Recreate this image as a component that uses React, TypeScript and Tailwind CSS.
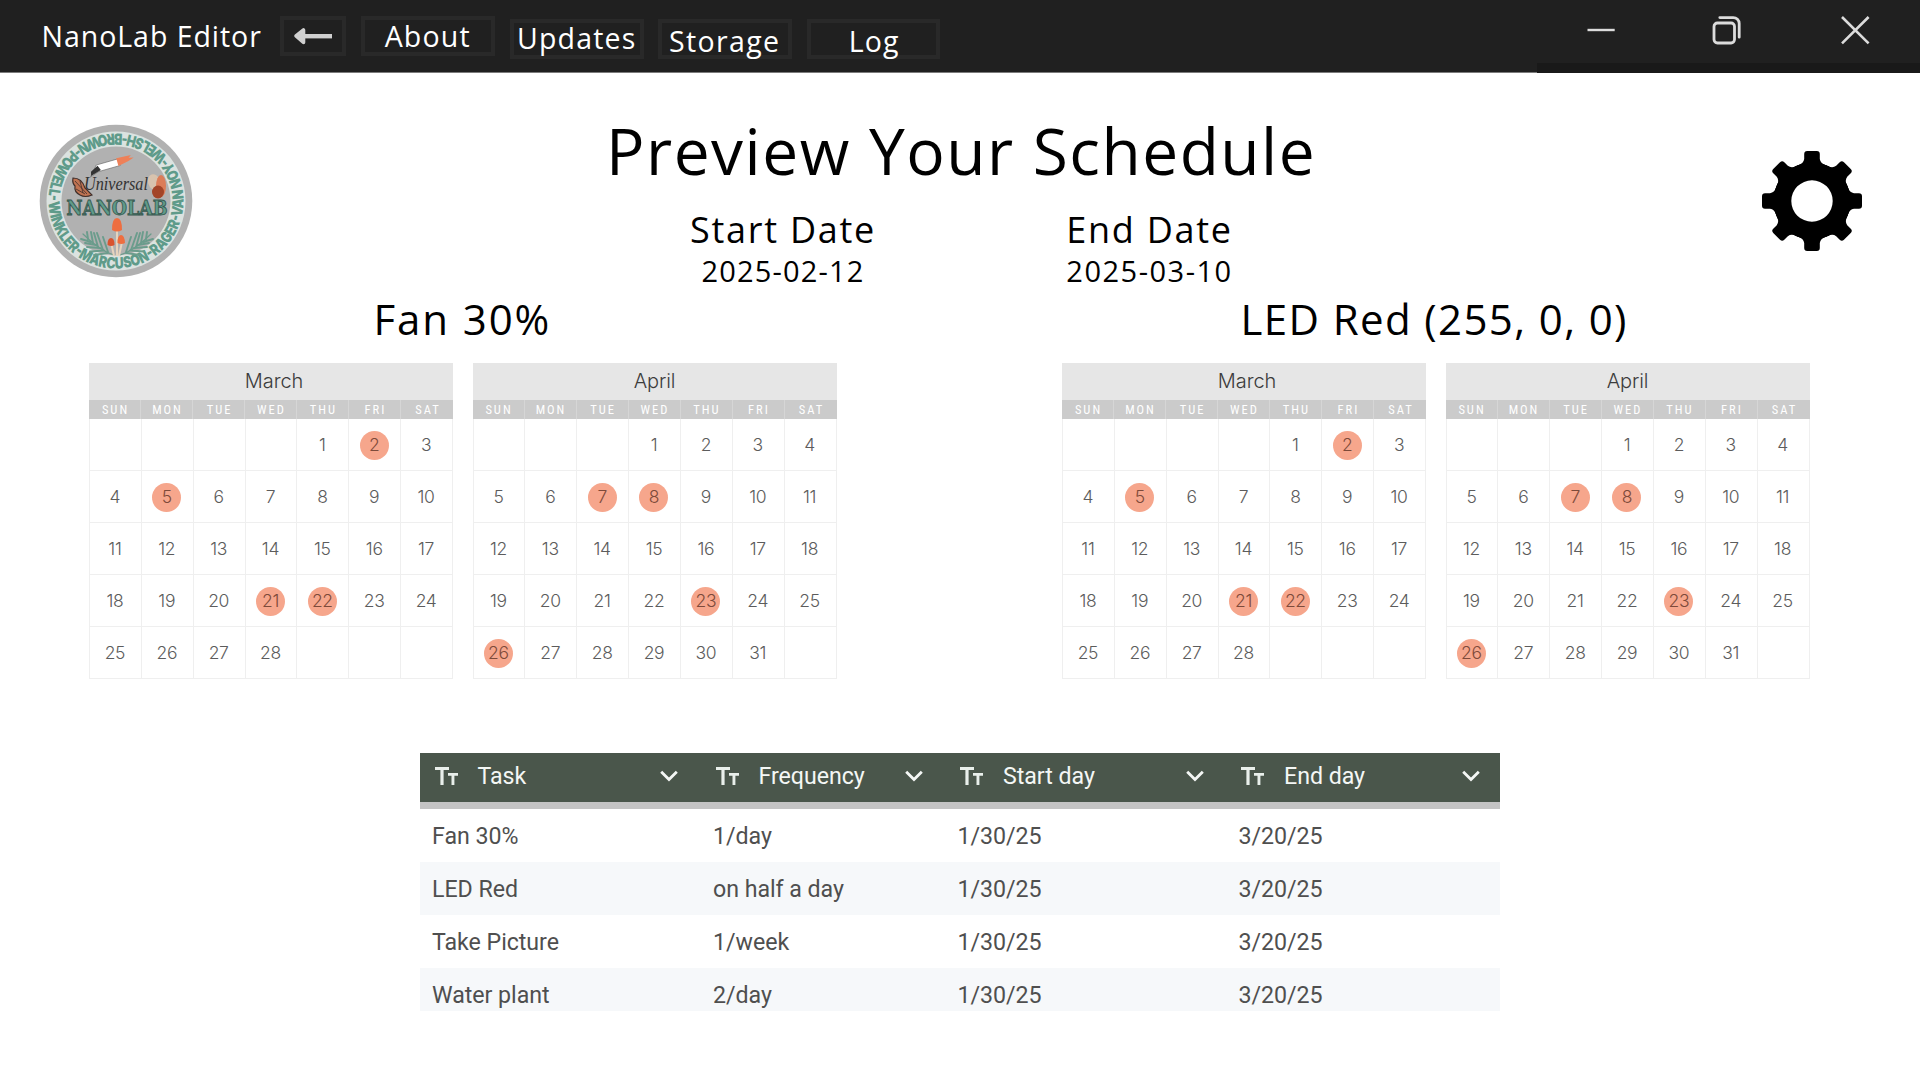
type Month = { name: string; offset: number; days: number; marked: number[]; titleClass: string };

const MONTHS: Month[] = [
  { name: 'March', offset: 4, days: 28, marked: [2, 5, 21, 22], titleClass: 'pl-1.5' },
  { name: 'April', offset: 3, days: 31, marked: [7, 8, 23, 26], titleClass: '' },
];
const WEEKDAYS = ['SUN', 'MON', 'TUE', 'WED', 'THU', 'FRI', 'SAT'];

const COLUMNS = ['Task', 'Frequency', 'Start day', 'End day'];
const TASKS = [
  ['Fan 30%', '1/day', '1/30/25', '3/20/25'],
  ['LED Red', 'on half a day', '1/30/25', '3/20/25'],
  ['Take Picture', '1/week', '1/30/25', '3/20/25'],
  ['Water plant', '2/day', '1/30/25', '3/20/25'],
];

function NavButton({ label, box, text }: { label: string; box: string; text: string }) {
  return (
    <button className={`flex h-10 w-[133.5px] items-start justify-center border-4 border-[#292929] ${box}`}>
      <span className={`whitespace-nowrap text-[28.5px] leading-10 ${text}`}>{label}</span>
    </button>
  );
}

function TitleBar() {
  return (
    <header className="flex h-[73px] items-start bg-[#202020] text-white">
      <div className="flex h-[73px] flex-1 items-start border-b border-[#7c7c7c]">
        <div className="mt-4 ml-[41.5px] w-[238.5px] whitespace-nowrap text-[28.5px] leading-10 tracking-[0.96px]">
          NanoLab Editor
        </div>
        <button className="mt-4 flex h-10 w-[66px] items-center justify-center border-4 border-[#292929]">
          <svg width="40" height="18" viewBox="0 0 40 18">
            <path d="M12 7h27v4.4H12z" fill="#d0d0d0" />
            <path d="M3 9 10.5 3v12.4z" fill="#d0d0d0" stroke="#d0d0d0" strokeWidth="3.6" strokeLinejoin="round" />
          </svg>
        </button>
        <nav className="flex items-start">
          <NavButton label="About" box="ml-[15px] mt-4" text="-mt-1 tracking-[1.2px]" />
          <NavButton label="Updates" box="ml-[15.5px] mt-[19px]" text="-mt-[5px] tracking-[1.2px]" />
          <NavButton label="Storage" box="ml-[14.5px] mt-[19px]" text="-mt-[2px] tracking-[1.35px]" />
          <NavButton label="Log" box="ml-[15px] mt-[19px]" text="-mt-[2px] tracking-[1.2px] pl-0.5" />
        </nav>
      </div>
      <div className="flex h-[73px] w-[383px] items-start border-b-[10px] border-[#191919]">
        <svg width="383" height="60" viewBox="0 0 383 60" fill="none" stroke="#dcdcdc" strokeWidth="2">
          <path d="M50.5 30h27.2" strokeWidth="2.4" />
          <rect x="177" y="23" width="20.5" height="20" rx="3.4" strokeWidth="2.8" />
          <path d="M182.8 17.6h13.4a6 6 0 0 1 6 6v13.6" strokeWidth="2.8" strokeLinecap="round" />
          <path d="m305 17 26.6 26.4M331.6 17 305 43.4" strokeWidth="2.6" />
        </svg>
      </div>
    </header>
  );
}

function Fern() {
  return (
    <g fill="none" stroke="#6b9c8c" strokeWidth="1.9" strokeLinecap="round">
      <path d="M-2 54Q-16 50-33 33" strokeWidth="1.2" />
      <path d="M-8 52l-14 2M-12 49.500l-14 1M-16 47l-13-1M-20 44l-11-2M-25 41l-10-3M-8 51l-5-15M-13 49l-6-17M-18 46l-4-14M-23 42l-2-11M-28 38l-1-7" />
    </g>
  );
}

function Logo() {
  return (
    <svg width="154" height="154" viewBox="-77 -77 154 154">
      <defs>
        <path id="logo-ring" d="M-67.500 0A67.500 67.500 0 0 0 67.500 0A67.500 67.500 0 0 0-67.500 0" />
      </defs>
      <circle r="76.300" fill="#b1b1b1" />
      <circle r="69.500" fill="#dbe3e0" />
      <circle r="54.500" fill="#b1b1b1" />
      <text fill="#5f9b8a" className="font-['Inter'] text-[15.5px] font-black">
        <textPath href="#logo-ring" startOffset="1" textLength="422" lengthAdjust="spacingAndGlyphs">
          WINKLER-MARCUSON-RAGER-VAN NOY-WELSH-BROWN-POWELL-
        </textPath>
      </text>
      <g transform="rotate(-16)">
        <path d="M-9-40h23v7h-23l-9 3z" fill="#fff" stroke="#666" strokeWidth="0.600" />
        <path d="M-16-35l8-4 2 5-11 3z" fill="#333" />
        <path d="M12-41l15 1-3 2 5 1-6 2-11 2z" fill="#ee8058" />
      </g>
      <circle cx="-23" cy="-29" r="1" fill="#333" />
      <path d="M-43-23q9 0 12 10l7 7q-7 3-12 0-6-3-5-9-3-3-2-8z" fill="#c07352" stroke="#40302c" strokeWidth="1.200" />
      <path d="M-41-20l12 13M-36-20l3 12M-40-12l9 5" stroke="#40302c" strokeWidth="0.800" />
      <ellipse cx="38" cy="-19" rx="6" ry="8" fill="#d8c3ae" transform="rotate(-18 38-19)" />
      <ellipse cx="45" cy="-15" rx="5" ry="11" fill="#dc7d59" />
      <ellipse cx="42" cy="-9" rx="6" ry="6.500" fill="#a34428" />
      <text x="0" y="-11" textAnchor="middle" fill="#333" textLength="64" lengthAdjust="spacingAndGlyphs" className="font-['Liberation_Serif'] text-[18px] italic">
        Universal
      </text>
      <text x="1" y="13.500" textAnchor="middle" fill="#5f9b8a" stroke="#38584f" strokeWidth="1" textLength="101" lengthAdjust="spacingAndGlyphs" className="font-['DejaVu_Serif'] text-[21px] font-bold">
        NANOLAB
      </text>
      <Fern />
      <g transform="translate(2 0) scale(-1 1)">
        <Fern />
      </g>
      <path d="M1 28v27M-5 41l3 14M6 41l-3 14" stroke="#e6d3bd" strokeWidth="2" />
      <path d="M-4 29q0-12 5-12t5 12q-5 3-10 0z" fill="#ee6e40" />
      <path d="M-8.500 44q0-7 3.500-7t3.500 7q-3.500 2-7 0z" fill="#d9532f" />
      <path d="M1.500 42q0-8 3.500-8t4 8q-3.500 2-7.500 0z" fill="#ee6e40" />
    </svg>
  );
}

function Gear() {
  return (
    <svg width="100" height="100" viewBox="-50 -50 100 100">
      <path
        fillRule="evenodd"
        d="M0-38.500A38.500 38.500 0 1 1 0 38.500A38.500 38.500 0 1 1 0-38.500ZM0-20.700A20.700 20.700 0 1 0 0 20.700A20.700 20.700 0 1 0 0-20.700Z"
      />
      {[0, 45, 90, 135, 180, 225, 270, 315].map((angle) => (
        <path
          key={angle}
          transform={`rotate(${angle})`}
          d="M-4.800-50H4.800Q7.800-50 7.800-47V-42Q8.500-37.500 13.500-36L19-33.500 0-24-19-33.500-13.500-36Q-8.500-37.500-7.800-42V-47Q-7.800-50-4.800-50Z"
        />
      ))}
    </svg>
  );
}

function DateField({ label, value, valueClass }: { label: string; value: string; valueClass: string }) {
  return (
    <div className="flex w-[183px] flex-col items-center whitespace-nowrap">
      <span className="text-[36px] leading-[48px] tracking-[1.75px]">{label}</span>
      <span className={`-mt-px text-[29px] leading-9 ${valueClass}`}>{value}</span>
    </div>
  );
}

function Calendar({ month }: { month: Month }) {
  const cells = Array.from({ length: 35 }, (_, i) => {
    const day = i - month.offset + 1;
    return day >= 1 && day <= month.days ? day : null;
  });
  return (
    <div className="w-[364px] font-['Inter']">
      <div
        className={`flex h-[37px] items-center justify-center bg-[#e6e6e6] text-[20px] font-light tracking-[-0.1px] text-[#3c3c3c] ${month.titleClass}`}
      >
        {month.name}
      </div>
      <div className="grid h-[19px] grid-cols-7 bg-[#cbcbcb]">
        {WEEKDAYS.map((d) => (
          <div
            key={d}
            className="flex items-center justify-center border-r border-[#d6d6d6] pl-[2px] font-['Roboto_Condensed'] text-[12.5px] leading-[19px] tracking-[2px] text-white last:border-r-0"
          >
            {d}
          </div>
        ))}
      </div>
      <div className="grid auto-rows-[52px] grid-cols-7 border-l border-[#efefef]">
        {cells.map((day, i) => (
          <div key={i} className="flex items-center justify-center border-r border-b border-[#efefef] pt-[2px] pr-px">
            {day !== null && (
              <span
                className={
                  month.marked.includes(day)
                    ? 'flex size-[29px] items-center justify-center rounded-full bg-[#f6a68c] pt-px text-[17.5px] font-light tracking-[-0.3px] text-[#7d4a3a]'
                    : 'pt-px text-[17.5px] font-light tracking-[-0.3px] text-[#5c5c5c]'
                }
              >
                {day}
              </span>
            )}
          </div>
        ))}
      </div>
    </div>
  );
}

function Schedule({ title, titleClass }: { title: string; titleClass: string }) {
  return (
    <section className="w-[747.5px]">
      <h2 className={`whitespace-nowrap text-[42px] leading-[56px] ${titleClass}`}>{title}</h2>
      <div className="mt-[15.5px] flex justify-between">
        {MONTHS.map((m) => (
          <Calendar key={m.name} month={m} />
        ))}
      </div>
    </section>
  );
}

function TextTypeIcon() {
  return (
    <svg width="23" height="18" viewBox="0 0 23 18" fill="#e9efeb">
      <path d="M0 0h14v3H8.600v15H5.400V3H0zM13 6h10v2.700h-3.600V18h-2.900V8.700H13z" />
    </svg>
  );
}

function TaskTable() {
  return (
    <div className="h-[258px] w-[1080px] overflow-hidden font-['Roboto'] text-[23.2px] tracking-[-0.04px]">
      <div className="grid h-[49.500px] grid-cols-[281px_244.5px_281px_273.5px] bg-[#4a564b] text-[#f4f7f5]">
        {COLUMNS.map((c) => (
          <div key={c} className="flex items-center pr-[23px] pb-[3px] pl-[14.5px] last:pr-[20px]">
            <TextTypeIcon />
            <span className="mt-[2px] ml-[20px] whitespace-nowrap">{c}</span>
            <svg className="mt-px ml-auto" width="18" height="12" viewBox="0 0 18 12" fill="none" stroke="#f4f7f5" strokeWidth="2.800">
              <path d="m1.200 1.800 7.800 7.800 7.800-7.800" />
            </svg>
          </div>
        ))}
      </div>
      <div className="h-[6.500px] bg-[#c4c4c4]" />
      <div>
        {TASKS.map((row) => (
          <div
            key={row[0]}
            className="grid h-[53px] grid-cols-[281px_244.5px_281px_273.5px] items-center pt-[2px] text-[#4f4f4f] odd:bg-white even:bg-[#f6f8fa]"
          >
            {row.map((cell, i) => (
              <span key={i} className="pl-[12px] whitespace-nowrap">
                {cell}
              </span>
            ))}
          </div>
        ))}
      </div>
    </div>
  );
}

export default function App() {
  return (
    <div className="h-[1080px] w-[1920px] overflow-hidden bg-white font-['Open_Sans',sans-serif] text-black">
      <TitleBar />
      <main className="flex flex-col">
        <div className="flex h-[218px] items-start pl-[39px]">
          <div className="mt-[50.500px]">
            <Logo />
          </div>
          <div className="ml-[413px] w-[712px] pt-[38px]">
            <h1 className="whitespace-nowrap text-[64px] leading-[80px] tracking-[1.5px]">Preview Your Schedule</h1>
            <div className="mt-[15px] ml-[85.500px] flex gap-[183.500px]">
              <DateField label="Start Date" value="2025-02-12" valueClass="tracking-[1.15px]" />
              <DateField label="End Date" value="2025-03-10" valueClass="tracking-[1.5px]" />
            </div>
          </div>
          <div className="ml-[444px] pt-[78px]">
            <Gear />
          </div>
        </div>
        <div className="flex gap-[225.500px] pl-[89px]">
          <Schedule title="Fan 30%" titleClass="pl-[284.5px] tracking-[1.9px]" />
          <Schedule title="LED Red (255, 0, 0)" titleClass="pl-[178.5px] tracking-[1.38px]" />
        </div>
        <div className="mt-[74px] pl-[420px]">
          <TaskTable />
        </div>
      </main>
    </div>
  );
}
